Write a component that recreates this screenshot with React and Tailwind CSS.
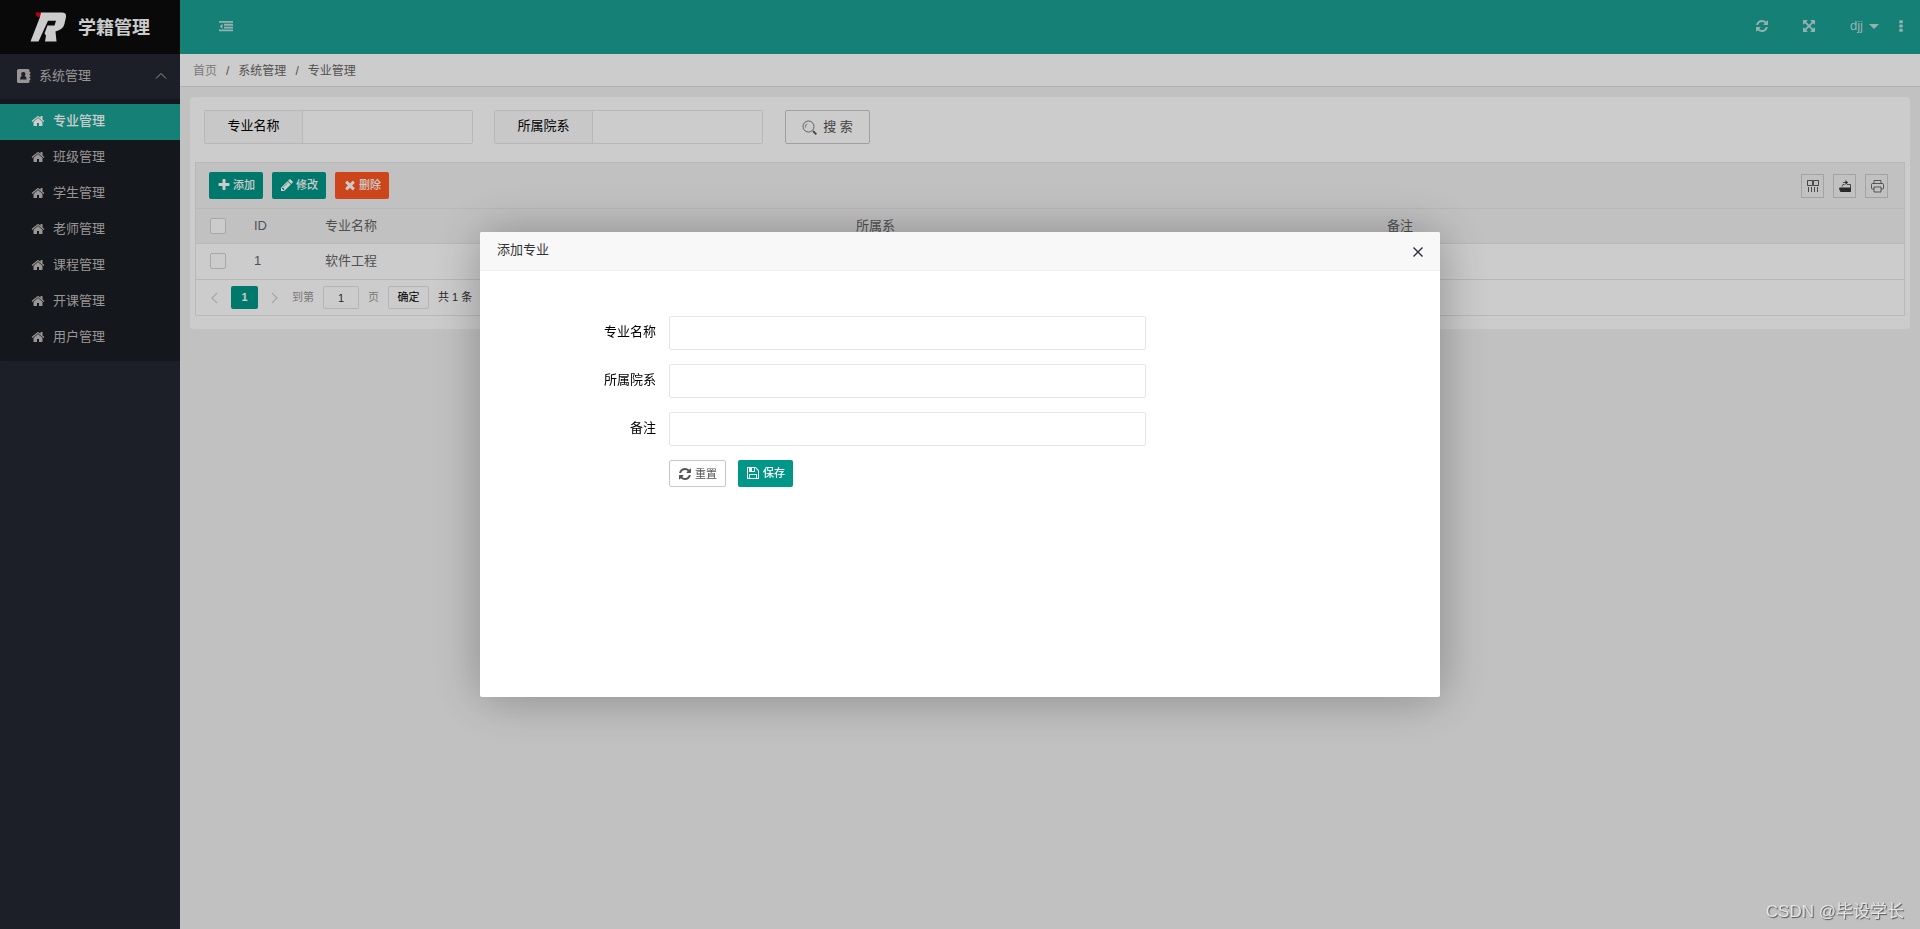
import React from "react";

const PATHS = {
  home: "M1472 992v480q0 26-19 45t-45 19h-384v-384h-256v384h-384q-26 0-45-19t-19-45v-480q0-1 .5-3t.5-3l575-474 575 474q1 2 1 6zm223-69l-62 74q-8 9-21 11h-3q-13 0-21-7l-692-577-692 577q-12 8-24 7-13-2-21-11l-62-74q-8-10-7-23.5t11-21.5l719-599q32-26 76-26t76 26l244 204v-195q0-14 9-23t23-9h192q14 0 23 9t9 23v408l219 182q10 8 11 21.5t-7 23.5z",
  refresh: "M1639 1056q0 5-1 7-64 268-268 434.5t-478 166.5q-146 0-282.5-55t-243.5-157l-129 129q-19 19-45 19t-45-19-19-45v-448q0-26 19-45t45-19h448q26 0 45 19t19 45-19 45l-137 137q71 66 161 102t187 36q134 0 250-65t186-179q11-17 53-117 8-23 30-23h192q13 0 22.5 9.5t9.5 22.5zm25-800v448q0 26-19 45t-45 19h-448q-26 0-45-19t-19-45 19-45l138-138q-148-137-349-137-134 0-250 65t-186 179q-11 17-53 117-8 23-30 23h-199q-13 0-22.5-9.5t-9.5-22.5v-7q65-268 270-434.5t480-166.5q146 0 284 55.5t245 156.5l130-129q19-19 45-19t45 19 19 45z",
  plus: "M1600 736v192q0 40-28 68t-68 28h-416v416q0 40-28 68t-68 28h-192q-40 0-68-28t-28-68v-416h-416q-40 0-68-28t-28-68v-192q0-40 28-68t68-28h416v-416q0-40 28-68t68-28h192q40 0 68 28t28 68v416h416q40 0 68 28t28 68z",
  pencil: "M491 1536l91-91-235-235-91 91v107h128v128h107zm523-928q0-22-22-22-10 0-17 7l-542 542q-7 7-7 17 0 22 22 22 10 0 17-7l542-542q7-7 7-17zm-54-192l416 416-832 832h-416v-416zm683 96q0 53-37 90l-166 166-416-416 166-165q36-38 90-38 53 0 91 38l235 234q37 39 37 91z",
  times: "M1490 1322q0 40-28 68l-136 136q-28 28-68 28t-68-28l-294-294-294 294q-28 28-68 28t-68-28l-136-136q-28-28-28-68t28-68l294-294-294-294q-28-28-28-68t28-68l136-136q28-28 68-28t68 28l294 294 294-294q28-28 68-28t68 28l136 136q28 28 28 68t-28 68l-294 294 294 294q28 28 28 68z",
  save: "M512 1536h768v-384h-768v384zm896 0h128v-896q0-14-10-38.5t-20-34.5l-281-281q-10-10-34-20t-39-10v416q0 40-28 68t-68 28h-576q-40 0-68-28t-28-68v-416h-128v1280h128v-416q0-40 28-68t68-28h832q40 0 68 28t28 68v416zm-384-928v-320q0-13-9.5-22.5t-22.5-9.5h-192q-13 0-22.5 9.5t-9.5 22.5v320q0 13 9.5 22.5t22.5 9.5h192q13 0 22.5-9.5t9.5-22.5zm640 32v928q0 40-28 68t-68 28h-1344q-40 0-68-28t-28-68v-1344q0-40 28-68t68-28h928q40 0 88 20t76 48l280 280q28 28 48 76t20 88z",
  expand: "M1411 541l-355 355 355 355 144-144q29-31 70-14 39 17 39 59v448q0 26-19 45t-45 19h-448q-42 0-59-40-17-39 14-69l144-144-355-355-355 355 144 144q31 30 14 69-17 40-59 40h-448q-26 0-45-19t-19-45v-448q0-42 40-59 39-17 69 14l144 144 355-355-355-355-144 144q-19 19-45 19-12 0-24-5-40-17-40-59v-448q0-26 19-45t45-19h448q42 0 59 40 17 39-14 69l-144 144 355 355 355-355-144-144q-31-30-14-69 17-40 59-40h448q26 0 45 19t19 45v448q0 42-39 59-13 5-25 5-26 0-45-19z",
  outdent: "M0 256h1792v232H0zM640 620h1152v232H640zM640 984h1152v232H640zM0 1348h1792v232H0zM448 600v640L96 918z",
  ellipsis: "M736 160h320q64 0 64 64v256q0 64-64 64h-320q-64 0-64-64v-256q0-64 64-64zM736 704h320q64 0 64 64v256q0 64-64 64h-320q-64 0-64-64v-256q0-64 64-64zM736 1248h320q64 0 64 64v256q0 64-64 64h-320q-64 0-64-64v-256q0-64 64-64z",
};

function Icon({ name, className }) {
  return (
    <svg viewBox="0 0 1792 1792" fill="currentColor" aria-hidden="true" className={`shrink-0 ${className}`}>
      <path d={PATHS[name]} />
    </svg>
  );
}

const MENU = ["专业管理", "班级管理", "学生管理", "老师管理", "课程管理", "开课管理", "用户管理"];

function Logo() {
  return (
    <svg viewBox="0 0 36 30" className="h-[30px] w-9" aria-hidden="true">
      <path
        fill="#fff"
        d="M10.500 .5H32Q36.500 .5 36 5L34.300 12.500Q33 17.500 25.500 19.500L26.500 29.500H15L16 23.500L14.500 21.500L17.500 13.500H24.500L26 8.700H18L8.500 29.500H.5L10 5z"
      />
      <path fill="#e60012" d="M5.500 .5H11L9.500 5.500Q5.500 4.500 5.500 .5z" />
    </svg>
  );
}

function Sidebar() {
  return (
    <aside className="w-[180px] shrink-0 bg-[#232731]">
      <div className="flex h-[54px] items-center gap-3 bg-[#0c0c0c] pl-[30px] text-white">
        <Logo />
        <h1 className="pt-[2px] text-lg font-bold">学籍管理</h1>
      </div>
      <nav>
        <button type="button" className="flex h-[45px] w-full items-center pr-[13px] pb-[2px] pl-[17px] text-[13px] text-[#bfbbb9]">
          <svg viewBox="0 0 14 14" className="mr-2 size-[14px]" aria-hidden="true">
            <path fill="currentColor" fillRule="evenodd" d="M1.500 0h9.500q1.500 0 1.500 1.500V3h.8v2h-.8v1h.8v2h-.8v1h.8v2h-.8v1.500Q12.500 14 11 14H1.500Q0 14 0 12.500v-11Q0 0 1.500 0zM6.300 3a2.100 2.100 0 0 0-1.300 3.800Q3 7.500 3 10.500h6.600Q9.600 7.500 7.600 6.800A2.100 2.100 0 0 0 6.300 3z" />
          </svg>
          <span>系统管理</span>
          <svg viewBox="0 0 12 8" className="ml-auto h-2 w-3" fill="none" stroke="currentColor" aria-hidden="true">
            <path d="M1 6.500 6 1.500l5 5" />
          </svg>
        </button>
        <ul className="rounded-[2px] bg-[#191d22] py-[5px]">
          {MENU.map((item, i) => (
            <li key={item}>
              <a
                href="#"
                className={`flex h-9 items-center gap-2 pb-[2px] pl-[31px] text-[13px] ${i === 0 ? "bg-[#1aa094] font-medium text-white" : "text-[#bfbbb9]"}`}
              >
                <Icon name="home" className="size-[14px]" />
                {item}
              </a>
            </li>
          ))}
        </ul>
      </nav>
    </aside>
  );
}

function Header() {
  return (
    <header className="flex h-[54px] items-center bg-[#1aa094] pr-3 pb-[2px] pl-[39px] text-[#b9dfdb]">
      <button type="button" aria-label="收起菜单">
        <Icon name="outdent" className="size-[14px]" />
      </button>
      <div className="ml-auto flex items-center">
        <button type="button" aria-label="刷新" className="mr-[33px]">
          <Icon name="refresh" className="size-[14px]" />
        </button>
        <button type="button" aria-label="全屏" className="mr-[34px]">
          <Icon name="expand" className="size-[14px]" />
        </button>
        <button type="button" className="mr-[15px] flex items-center gap-[6px] text-[13px]">
          djj
          <svg viewBox="0 0 10 5" className="h-[5px] w-[10px]" fill="currentColor" aria-hidden="true">
            <path d="M0 0h10L5 5z" />
          </svg>
        </button>
        <button type="button" aria-label="更多">
          <Icon name="ellipsis" className="size-[14px]" />
        </button>
      </div>
    </header>
  );
}

function SearchField({ id, label }) {
  return (
    <div className="flex h-[34px] w-[269px] rounded-[2px] border border-[#e6e6e6]">
      <label htmlFor={id} className="flex w-[98px] items-center justify-center border-r border-[#e6e6e6] bg-[#fbfbfb] pb-[2px] text-[13px] text-black">
        {label}
      </label>
      <input id={id} type="text" className="min-w-0 flex-1 bg-white px-2 text-[13px] outline-none" />
    </div>
  );
}

function ToolButton({ icon, color, children }) {
  return (
    <button type="button" className={`flex h-[27px] items-center gap-[2px] rounded-[2px] px-2 pb-px text-[11px] font-medium text-white ${color}`}>
      <Icon name={icon} className="size-[14px]" />
      {children}
    </button>
  );
}

function SquareButton({ label, children }) {
  return (
    <button type="button" aria-label={label} className="flex h-6 w-[23px] items-center justify-center border border-[#ccc] text-[#333]">
      <svg viewBox="0 0 14 14" className="size-[14px]" fill="none" stroke="currentColor" aria-hidden="true">
        {children}
      </svg>
    </button>
  );
}

const checkbox = "block size-4 appearance-none rounded-[2px] border border-[#d2d2d2] bg-white";

function DataTable() {
  return (
    <table className="w-full table-fixed border-separate border-spacing-0 text-left text-[13px] text-[#666] [&_td]:border-b [&_td]:border-[#e6e6e6] [&_td]:pb-px [&_th]:border-b [&_th]:border-[#e6e6e6] [&_th]:pb-px">
      <colgroup>
        <col className="w-[43px]" />
        <col className="w-[72px]" />
        <col />
        <col />
        <col />
      </colgroup>
      <thead>
        <tr className="h-[35px] bg-[#f2f2f2]">
          <th className="pl-[14px]"><input type="checkbox" aria-label="全选" className={checkbox} /></th>
          <th className="pl-[15px] font-normal">ID</th>
          <th className="pl-[14px] font-normal">专业名称</th>
          <th className="pl-[14px] font-normal">所属系</th>
          <th className="pl-[14px] font-normal">备注</th>
        </tr>
      </thead>
      <tbody>
        <tr className="h-9">
          <td className="pl-[14px]"><input type="checkbox" aria-label="选择 1" className={checkbox} /></td>
          <td className="pl-[15px]">1</td>
          <td className="pl-[14px]">软件工程</td>
          <td />
          <td />
        </tr>
      </tbody>
    </table>
  );
}

function Pager() {
  return (
    <div className="flex h-[35px] items-center pl-[14px] text-[11px] text-[#333]">
      <button type="button" aria-label="上一页" className="text-[#d2d2d2]">
        <svg viewBox="0 0 8 12" className="h-3 w-2" fill="none" stroke="currentColor" strokeWidth="1.300"><path d="M7 1 2 6l5 5" /></svg>
      </button>
      <button type="button" className="ml-[13px] h-[23px] w-[27px] rounded-[2px] bg-[#009688] font-bold text-white">1</button>
      <button type="button" aria-label="下一页" className="ml-[13px] text-[#d2d2d2]">
        <svg viewBox="0 0 8 12" className="h-3 w-2" fill="none" stroke="currentColor" strokeWidth="1.300"><path d="m1 1 5 5-5 5" /></svg>
      </button>
      <label htmlFor="page" className="ml-[13px] text-[#999]">到第</label>
      <input id="page" type="text" defaultValue="1" className="ml-[9px] h-[23px] w-9 rounded-[2px] border border-[#e2e2e2] bg-white text-center outline-none" />
      <span className="ml-[9px] text-[#999]">页</span>
      <button type="button" className="ml-[9px] h-[23px] w-[41px] rounded-[2px] border border-[#e2e2e2] bg-white text-black">确定</button>
      <span className="ml-[9px]">共 1 条</span>
    </div>
  );
}

function Content() {
  return (
    <main className="flex-1 bg-[#f2f2f2] px-[10px] pt-[10px]">
      <section className="rounded-[4px] bg-white px-[5px] pt-[13px] pb-[13px]">
        <form className="mb-[18px] flex pl-[9px]">
          <SearchField id="q-name" label="专业名称" />
          <div className="ml-[21px]">
            <SearchField id="q-dept" label="所属院系" />
          </div>
          <button type="button" className="ml-[22px] flex h-[34px] w-[85px] items-center justify-center gap-[6px] rounded-[2px] border border-[#c9c9c9] bg-white text-[13px] text-[#555]">
            <svg viewBox="0 0 15 15" className="size-[15px]" fill="none" stroke="currentColor" aria-hidden="true">
              <circle cx="6.500" cy="6.500" r="5.500" strokeWidth=".8" />
              <path d="M3.700 7.500a3 3 0 0 1 1.600-3.700" strokeWidth=".7" />
              <path d="m11 11 3.300 3.300" strokeWidth="1.800" />
            </svg>
            搜 索
          </button>
        </form>
        <div className="border border-[#e6e6e6]">
          <div className="flex h-[46px] items-center gap-[9px] border-b border-[#e6e6e6] bg-[#f2f2f2] pr-4 pl-[13px]">
            <ToolButton icon="plus" color="bg-[#009688]">添加</ToolButton>
            <ToolButton icon="pencil" color="bg-[#009688]">修改</ToolButton>
            <ToolButton icon="times" color="bg-[#ff5722]">删除</ToolButton>
            <div className="ml-auto flex gap-[9px]">
              <SquareButton label="筛选列">
                <path d="M1.500 1.500h5v5h-5zM7.500 1.500h5v5h-5zM2.500 8v5M5.500 8v5M8.500 8v5M11.500 8v5" strokeWidth=".8" />
              </SquareButton>
              <SquareButton label="导出">
                <path d="M1.500 9h11v3.500h-10z" fill="currentColor" />
                <path d="M4 7.500 5 5.500h1.500M5 3.500h3M9 5.500h3.500V9" strokeWidth=".8" />
                <path d="M7.500 1 10 3.500 7.500 6z" fill="currentColor" stroke="none" />
              </SquareButton>
              <SquareButton label="打印">
                <path d="M4 4.500v-3h7v3M4 10H2.500q-1 0-1-1V5.500q0-1 1-1h10q1 0 1 1V9q0 1-1 1H11M4 8h7v5H4z" strokeWidth=".7" />
              </SquareButton>
            </div>
          </div>
          <DataTable />
          <Pager />
        </div>
      </section>
    </main>
  );
}

function FormRow({ id, label }) {
  return (
    <div className="flex items-center">
      <label htmlFor={id} className="w-44 pr-[13px] pb-[3px] text-right text-[13px] text-black">{label}</label>
      <input id={id} type="text" className="h-[34px] flex-1 rounded-[2px] border border-[#e6e6e6] bg-white px-2 text-[13px] outline-none" />
    </div>
  );
}

function AddDialog() {
  return (
    <div className="fixed inset-0 flex items-start justify-center bg-black/20 pt-[25vh]">
      <div role="dialog" aria-labelledby="dialog-title" className="h-[50vh] min-h-[300px] w-1/2 rounded-[2px] bg-white shadow-[1px_1px_50px_rgba(0,0,0,0.3)]">
        <div className="flex h-[39px] items-center justify-between rounded-t-[2px] border-b border-[#eee] bg-[#f8f8f8] pr-4 pl-[17px]">
          <h2 id="dialog-title" className="pb-1 text-[13px] text-[#333]">添加专业</h2>
          <button type="button" aria-label="关闭" className="pt-[2px] text-[#2d2c3b]">
            <svg viewBox="0 0 12 12" className="size-3" fill="none" stroke="currentColor" strokeWidth="1.400"><path d="m1.500 1.500 9 9M10.500 1.500l-9 9" /></svg>
          </button>
        </div>
        <form className="flex flex-col gap-[14px] pt-[45px] pr-[294px] pl-[13px]">
          <FormRow id="f-name" label="专业名称" />
          <FormRow id="f-dept" label="所属院系" />
          <FormRow id="f-note" label="备注" />
          <div className="flex gap-3 pl-44">
            <button type="reset" className="flex h-[27px] items-center gap-[3px] rounded-[2px] border border-[#c9c9c9] bg-white px-2 text-[11px] text-[#555]">
              <Icon name="refresh" className="size-[14px]" />
              重置
            </button>
            <button type="button" className="flex h-[27px] items-center gap-[3px] rounded-[2px] bg-[#009688] px-2 pb-px text-[11px] font-medium text-white">
              <Icon name="save" className="size-[14px]" />
              保存
            </button>
          </div>
        </form>
      </div>
    </div>
  );
}

export default function App() {
  return (
    <div className="flex min-h-screen font-['Liberation_Sans','Noto_Sans_CJK_SC',sans-serif]">
      <Sidebar />
      <div className="flex min-w-0 flex-1 flex-col">
        <Header />
        <nav aria-label="面包屑" className="flex h-[33px] items-center gap-[9px] border-b border-[#dcdcdc] bg-white pt-[2px] pl-[13px] text-xs text-[#666]">
          <a href="#" className="text-[#999]">首页</a>
          <span>/</span>
          <a href="#">系统管理</a>
          <span>/</span>
          <span>专业管理</span>
        </nav>
        <Content />
      </div>
      <AddDialog />
      <p className="fixed right-4 bottom-[5px] text-[17px] text-[#e4e4e4] [text-shadow:1px_1px_1px_#555]">CSDN @毕设学长</p>
    </div>
  );
}
